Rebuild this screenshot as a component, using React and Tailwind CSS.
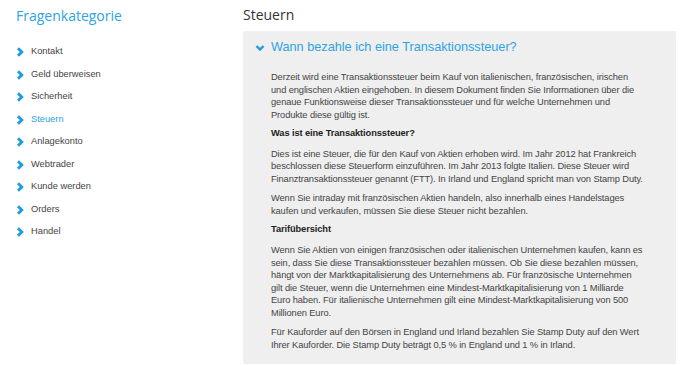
import React from "react";

const items = ["Kontakt","Geld überweisen","Sicherheit","Steuern","Anlagekonto","Webtrader","Kunde werden","Orders","Handel"];

function Chevron({ className }) {
  return (
    <svg viewBox="0 0 10 10" className={className} fill="none" stroke="currentColor" strokeWidth="2.8" strokeLinecap="butt" strokeLinejoin="miter">
      <path d="M3 1.2 L6.8 5 L3 8.8" />
    </svg>
  );
}
function ChevronDown({ className }) {
  return (
    <svg viewBox="0 0 10 10" className={className} fill="none" stroke="currentColor" strokeWidth="2.4">
      <path d="M1.5 3 L5 6.5 L8.5 3" />
    </svg>
  );
}

export default function App() {
  const p = "mb-[7px]";
  const h = "-mt-[1px] mb-[8px] font-bold text-[#222]";
  return (
    <div className="w-[692px] h-[365px] bg-white overflow-hidden flex font-['Liberation_Sans',Arial,sans-serif]">
      <div className="w-[243px] shrink-0 pl-[16px] pt-[6px]">
        <div className="text-[14px] text-[#2ea3e3] font-['Open_Sans',sans-serif] leading-[20px]">Fragenkategorie</div>
        <ul className="mt-[19px] flex flex-col gap-[8.5px]">
          {items.map((it) => (
            <li key={it} className={"flex items-center h-[14px] text-[9.3px] " + (it === "Steuern" ? "text-[#2ea3e3]" : "text-[#444]")}>
              <Chevron className="w-[10px] h-[10px] -ml-[1px] text-[#1c9be0] mr-[6px]" />
              <span>{it}</span>
            </li>
          ))}
        </ul>
      </div>
      <div className="flex-1 pr-[16px]">
        <div className="text-[14px] text-[#333] font-['Open_Sans',sans-serif] leading-[20px] pt-[5px]">Steuern</div>
        <div className="mt-[6px] bg-[#efefef] rounded-[2px] w-[433px] h-[333px] pl-[12px] pt-[8px]">
          <div className="flex items-center text-[#2ea3e3] text-[12.7px] h-[18px]">
            <ChevronDown className="w-[10px] h-[10px] mr-[6px] text-[#1c9be0]" />
            <span>Wann bezahle ich eine Transaktionssteuer?</span>
          </div>
          <div className="ml-[16px] w-[374px] mt-[14px] text-[9.3px] leading-[12.55px] tracking-[-0.1px] text-[#444]">
            <p className={p}>Derzeit wird eine Transaktionssteuer beim Kauf von italienischen, französischen, irischen und englischen Aktien eingehoben. In diesem Dokument finden Sie Informationen über die genaue Funktionsweise dieser Transaktionssteuer und für welche Unternehmen und Produkte diese gültig ist.</p>
            <p className={h}>Was ist eine Transaktionssteuer?</p>
            <p className={p}>Dies ist eine Steuer, die für den Kauf von Aktien erhoben wird. Im Jahr 2012 hat Frankreich beschlossen diese Steuerform einzuführen. Im Jahr 2013 folgte Italien. Diese Steuer wird Finanztransaktionssteuer genannt (FTT). In Irland und England spricht man von Stamp Duty.</p>
            <p className={p}>Wenn Sie intraday mit französischen Aktien handeln, also innerhalb eines Handelstages kaufen und verkaufen, müssen Sie diese Steuer nicht bezahlen.</p>
            <p className={h}>Tarifübersicht</p>
            <p className={p}>Wenn Sie Aktien von einigen französischen oder italienischen Unternehmen kaufen, kann es sein, dass Sie diese Transaktionssteuer bezahlen müssen. Ob Sie diese bezahlen müssen, hängt von der Marktkapitalisierung des Unternehmens ab. Für französische Unternehmen gilt die Steuer, wenn die Unternehmen eine Mindest-Marktkapitalisierung von 1 Milliarde Euro haben. Für italienische Unternehmen gilt eine Mindest-Marktkapitalisierung von 500 Millionen Euro.</p>
            <p className={p}>Für Kauforder auf den Börsen in England und Irland bezahlen Sie Stamp Duty auf den Wert Ihrer Kauforder. Die Stamp Duty beträgt 0,5 % in England und 1 % in Irland.</p>
          </div>
        </div>
      </div>
    </div>
  );
}
